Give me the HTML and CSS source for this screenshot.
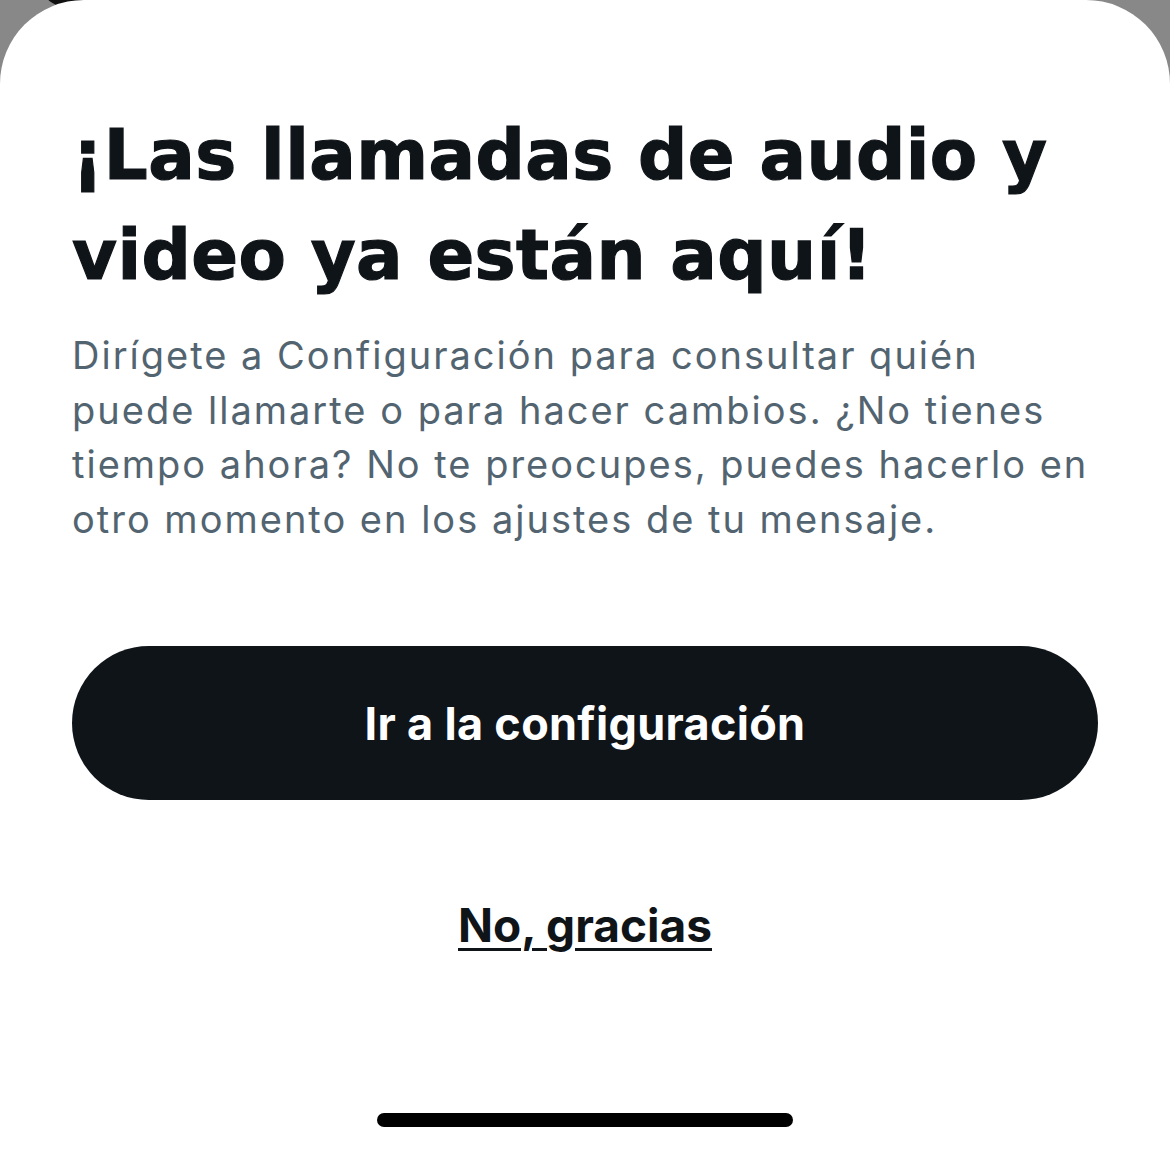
FILE: index.html
```html
<!DOCTYPE html>
<html lang="es">
<head>
    <meta charset="UTF-8">
    <meta name="viewport" content="width=device-width, initial-scale=1.0">
    <title>Llamadas de audio y video</title>
    <link rel="stylesheet" href="styles.css">
</head>
<body>

    <!-- Lo que asoma detrás de la hoja -->
    <div class="behind"></div>

    <div class="sheet">
        <h1 class="title">¡Las llamadas de audio y video ya están aquí!</h1>
        <p class="text">Dirígete a Configuración para consultar quién puede llamarte o para hacer cambios. ¿No tienes tiempo ahora? No te preocupes, puedes hacerlo en otro momento en los ajustes de tu mensaje.</p>

        <button class="primary">Ir a la configuración</button>

        <a href="#" class="later">No, gracias</a>

        <div class="home-bar"></div>
    </div>

</body>
</html>
```

FILE: styles.css
```css
body {
    margin: 0;
    padding: 0;
    background-color: #888888;
    font-family: Inter, "Noto Sans", sans-serif;
    min-height: 100vh;
    position: relative;
    overflow: hidden;
}
.behind {
    position: absolute;
    left: 36px;
    top: -30px;
    width: 70px;
    height: 40px;
    border-radius: 50%;
    background-color: #111;
    transform: rotate(20deg);
}
.sheet {
    position: relative;
    background-color: #fff;
    border-radius: 84px 84px 0 0;
    min-height: 1152px;
    box-sizing: border-box;
    padding: 105px 72px 0 72px;
    display: flex;
    flex-direction: column;
    align-items: stretch;
}
.title {
    margin: 0;
    font-family: "DejaVu Sans", Inter, sans-serif;
    font-size: 69px;
    line-height: 100px;
    font-weight: 700;
    color: #0f1419;
    letter-spacing: 0.4px;
    -webkit-text-stroke: 1.2px #0f1419;
}
.text {
    margin: 23px 0 0 0;
    font-size: 38px;
    line-height: 54.5px;
    font-weight: 400;
    color: #536471;
    letter-spacing: 2px;
}
.primary {
    margin-top: 100px;
    height: 154px;
    border: none;
    border-radius: 77px;
    background-color: #0f1419;
    color: #fff;
    font-family: inherit;
    font-size: 45px;
    font-weight: 700;
    letter-spacing: 0.3px;
    cursor: pointer;
}
.later {
    margin-top: 95px;
    align-self: center;
    font-size: 46px;
    line-height: 60px;
    font-weight: 700;
    color: #0f1419;
    text-decoration: underline;
    text-decoration-thickness: 3px;
    text-underline-offset: 6px;
}
.home-bar {
    margin-top: 158px;
    align-self: center;
    width: 416px;
    height: 14px;
    border-radius: 7px;
    background-color: #000;
}
```
